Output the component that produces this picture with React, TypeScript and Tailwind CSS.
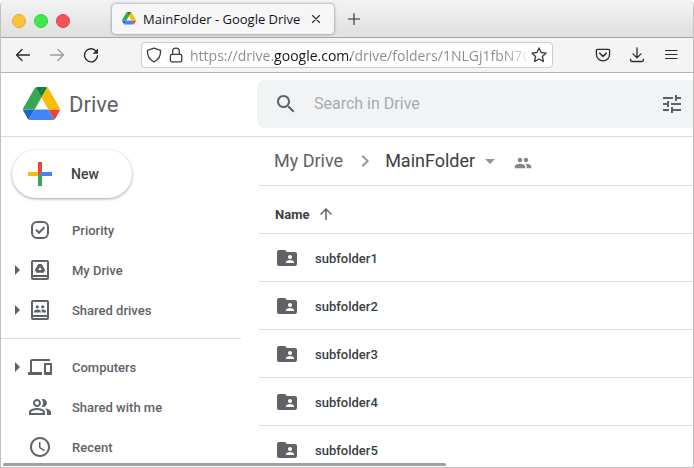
import type { ReactNode } from 'react';

type IconProps = { d: string; size?: string; className?: string };

function Icon({ d, size = 'size-6', className = '' }: IconProps) {
  return (
    <svg viewBox="0 0 24 24" fill="currentColor" aria-hidden="true" className={`block shrink-0 ${size} ${className}`}>
      <path d={d} />
    </svg>
  );
}

const PATHS = {
  search:
    'M15.5 14h-.79l-.28-.27C15.41 12.59 16 11.11 16 9.5 16 5.91 13.09 3 9.5 3S3 5.91 3 9.5 5.91 16 9.5 16c1.61 0 3.09-.59 4.23-1.57l.27.28v.79l5 4.99L20.49 19l-4.99-5zm-6 0C7.01 14 5 11.99 5 9.5S7.01 5 9.5 5 14 7.01 14 9.5 11.99 14 9.5 14z',
  tune: 'M3 17v2h6v-2H3zM3 5v2h10V5H3zm10 16v-2h8v-2h-8v-2h-2v6h2zM7 9v2H3v2h4v2h2V9H7zm14 4v-2H11v2h10zm-6-4h2V7h4V5h-4V3h-2v6z',
  chevron: 'M10 6 8.59 7.41 13.17 12l-4.58 4.59L10 18l6-6z',
  dropDown: 'M7 10l5 5 5-5z',
  people:
    'M16 11c1.66 0 2.99-1.34 2.99-3S17.66 5 16 5s-3 1.34-3 3 1.34 3 3 3zm-8 0c1.66 0 2.99-1.34 2.99-3S9.66 5 8 5 5 6.34 5 8s1.34 3 3 3zm0 2c-2.33 0-7 1.17-7 3.5V19h14v-2.5c0-2.33-4.67-3.5-7-3.5zm8 0c-.29 0-.62.02-.97.05 1.16.84 1.97 1.97 1.97 3.45V19h6v-2.5c0-2.33-4.67-3.5-7-3.5z',
  arrowUp: 'M4 12l1.41 1.41L11 7.83V20h2V7.83l5.58 5.59L20 12l-8-8-8 8z',
  folderShared:
    'M20 6h-8l-2-2H4c-1.1 0-1.99.9-1.99 2L2 18c0 1.1.9 2 2 2h16c1.1 0 2-.9 2-2V8c0-1.1-.9-2-2-2zm-5 3c1.1 0 2 .9 2 2s-.9 2-2 2-2-.9-2-2 .9-2 2-2zm4 8h-8v-1c0-1.33 2.67-2 4-2s4 .67 4 2v1z',
  devices:
    'M4 6h18V4H4c-1.1 0-2 .9-2 2v11H0v3h14v-3H4V6zm19 2h-6c-.55 0-1 .45-1 1v10c0 .55.45 1 1 1h6c.55 0 1-.45 1-1V9c0-.55-.45-1-1-1zm-1 9h-4v-7h4v7z',
  shared:
    'M16.67 13.13C18.04 14.06 19 15.32 19 17v3h4v-3c0-2.18-3.57-3.47-6.33-3.87zM15 12c2.21 0 4-1.79 4-4s-1.79-4-4-4c-.47 0-.91.1-1.33.24C14.5 5.27 15 6.58 15 8s-.5 2.73-1.33 3.76c.42.14.86.24 1.33.24zM9 12c2.21 0 4-1.79 4-4s-1.79-4-4-4-4 1.79-4 4 1.79 4 4 4zm0-6c1.1 0 2 .9 2 2s-.9 2-2 2-2-.9-2-2 .9-2 2-2zm0 7c-2.67 0-8 1.34-8 4v3h16v-3c0-2.66-5.33-4-8-4zm6 5H3v-.99C3.2 16.29 6.3 15 9 15s5.8 1.29 6 2v1z',
  clock:
    'M11.99 2C6.47 2 2 6.48 2 12s4.47 10 9.99 10C17.52 22 22 17.52 22 12S17.52 2 11.99 2zM12 20c-4.42 0-8-3.58-8-8s3.58-8 8-8 8 3.58 8 8-3.58 8-8 8zm.5-13H11v6l5.25 3.15.75-1.23-4.5-2.67z',
};

function DriveLogo({ className }: { className: string }) {
  return (
    <svg viewBox="0 0 87.3 78" aria-hidden="true" className={`block shrink-0 ${className}`}>
      <path fill="#1967d2" d="m6.6 66.85 3.85 6.65c.8 1.4 1.95 2.5 3.3 3.3l13.75-23.8h-27.5c0 1.55.4 3.1 1.2 4.5z" />
      <path fill="#34a853" d="m43.65 25-13.75-23.8c-1.35.8-2.5 1.9-3.3 3.3l-25.4 44a9.06 9.06 0 0 0-1.2 4.5h27.5z" />
      <path fill="#ea4335" d="m73.55 76.8c1.35-.8 2.5-1.9 3.3-3.3l1.6-2.75 7.65-13.25c.8-1.4 1.2-2.95 1.2-4.5h-27.5z" />
      <path fill="#188038" d="m43.65 25 13.75-23.8c-1.35-.8-2.9-1.2-4.5-1.2h-18.5c-1.6 0-3.15.45-4.5 1.2z" />
      <path fill="#4285f4" d="m59.8 53h-32.3l-13.75 23.8c1.35.8 2.9 1.2 4.5 1.2h50.8c1.6 0 3.15-.45 4.5-1.2z" />
      <path fill="#fbbc04" d="m73.4 26.5-12.7-22c-.8-1.4-1.95-2.5-3.3-3.3l-13.75 23.8 16.15 28h27.45c0-1.55-.4-3.1-1.2-4.5z" />
    </svg>
  );
}

function LineIcon({ children, className = '' }: { children: ReactNode; className?: string }) {
  return (
    <svg
      viewBox="0 0 16 16"
      fill="none"
      stroke="currentColor"
      strokeWidth="1.3"
      strokeLinecap="round"
      strokeLinejoin="round"
      aria-hidden="true"
      className={`block size-4 shrink-0 ${className}`}
    >
      {children}
    </svg>
  );
}

function ToolButton({ label, children }: { label: string; children: ReactNode }) {
  return (
    <button type="button" aria-label={label} className="flex h-8 w-[34px] shrink-0 items-center justify-center text-[#2b2a33]">
      {children}
    </button>
  );
}

function TitleBar() {
  return (
    <div className="flex h-[38px] items-center border-b border-[#a5a5a5] bg-linear-to-b from-[#f3f3f3] to-[#dfdfdf] pl-[11px]">
      <div className="flex w-[100px] gap-2 pt-1">
        <button type="button" aria-label="Minimize" className="size-3.5 rounded-full border border-[#e0ac2f] bg-[#fbc338]" />
        <button type="button" aria-label="Maximize" className="size-3.5 rounded-full border border-[#35cf42] bg-[#3eea4b]" />
        <button type="button" aria-label="Close" className="size-3.5 rounded-full border border-[#dc454d] bg-[#f5515a]" />
      </div>
      <div className="flex h-[30px] w-[222px] items-center rounded bg-[#f6f6f6] px-2.5 shadow-[0_0_3px_rgba(0,0,0,0.5)]">
        <DriveLogo className="w-3.5" />
        <span className="ml-[7px] flex-1 pt-0.5 font-['Open_Sans','Noto_Sans',sans-serif] text-[13px] whitespace-nowrap text-[#15141a]">
          MainFolder - Google Drive
        </span>
        <button type="button" aria-label="Close tab" className="text-[#2b2a33]">
          <LineIcon>
            <path d="M4.5 4.5l7 7M11.5 4.5l-7 7" strokeWidth="1.1" />
          </LineIcon>
        </button>
      </div>
      <button type="button" aria-label="New tab" className="ml-3 text-[#2b2a33]">
        <LineIcon>
          <path d="M8 2.5v11M2.5 8h11" strokeWidth="1.1" />
        </LineIcon>
      </button>
    </div>
  );
}

function AddressBar() {
  return (
    <div className="flex h-[35px] items-center border-b border-[#b4b4b4] bg-[#f4f4f4] px-[5px]">
      <ToolButton label="Back">
        <LineIcon>
          <path d="M14.5 8H1.5M7 2.5 1.5 8 7 13.5" />
        </LineIcon>
      </ToolButton>
      <ToolButton label="Forward">
        <LineIcon className="text-[#9c9ca0]">
          <path d="M1.5 8h13M9 2.5 14.5 8 9 13.5" />
        </LineIcon>
      </ToolButton>
      <ToolButton label="Reload">
        <LineIcon>
          <path d="M13.2 4.4A6.5 6.5 0 1 0 14.500 8.8" strokeWidth="1.4" />
          <path d="M15 1.400v5.400H9.600z" fill="currentColor" stroke="none" />
        </LineIcon>
      </ToolButton>
      <div className="mx-[33px] flex h-[26px] min-w-0 flex-1 items-center rounded border border-[#cccccc] bg-white pr-[5px] pl-1 text-[#3c3b44]">
        <LineIcon>
          <path d="M8 1.2 14.6 3.3C14.9 9 12.6 12.8 8 15 3.4 12.8 1.1 9 1.4 3.3z" />
        </LineIcon>
        <LineIcon className="ml-1.5">
          <rect x="2.4" y="7.4" width="11.4" height="7.4" rx="1.6" />
          <path d="M4.6 7.2V4.6a3.4 3.4 0 0 1 6.8 0v2.6" />
        </LineIcon>
        <input
          type="text"
          aria-label="Address"
          readOnly
          value="https://drive.google.com/drive/folders/1NLGj1fbN7C"
          className="ml-1.5 h-6 min-w-0 flex-1 bg-[linear-gradient(to_right,#8a8a8d_84px,#15141a_84px,#15141a_161px,#8a8a8d_161px,#8a8a8d_315px,transparent_340px)] bg-clip-text font-['Open_Sans','Noto_Sans',sans-serif] text-[14px] text-transparent outline-none"
        />
        <button type="button" aria-label="Bookmark this page" className="ml-1">
          <LineIcon>
            <path d="M8 .9 10.1 5.5l5 .6-3.7 3.4 1 5L8 12l-4.4 2.5 1-5L.9 6.1l5-.6z" />
          </LineIcon>
        </button>
      </div>
      <ToolButton label="Save to Pocket">
        <LineIcon>
          <path d="M2.6 2.3h10.8c.7 0 1.2.5 1.2 1.2v3.8a6.6 6.6 0 0 1-13.2 0V3.5c0-.7.5-1.2 1.2-1.2z" />
          <path d="M4.7 6.3 8 9.4l3.3-3.1" strokeWidth="1.5" />
        </LineIcon>
      </ToolButton>
      <ToolButton label="Downloads">
        <LineIcon>
          <path d="M8 .8v9.8M4 6.9l4 4 4-4M1.6 12.2v.9c0 .8.6 1.4 1.4 1.4h10c.8 0 1.4-.6 1.4-1.4v-.9" />
        </LineIcon>
      </ToolButton>
      <ToolButton label="Menu">
        <LineIcon>
          <path d="M2.500 3.500h11.500M2.500 7.500h11.500M2.500 11.500h11.500" strokeWidth="1.2" />
        </LineIcon>
      </ToolButton>
    </div>
  );
}

function Header() {
  return (
    <header className="flex h-16 items-center border-b border-[#dadce0] pb-px">
      <a href="#home" className="flex w-64 shrink-0 items-center gap-[9px] pl-[22px] text-[22px] leading-7 text-[#5f6368]">
        <DriveLogo className="w-[37px]" />
        <span className="pt-0.5">Drive</span>
      </a>
      <form className="flex h-12 min-w-0 flex-1 items-center gap-4 rounded-l-lg bg-[#f1f3f4] pr-[9px] pl-[17px] text-[#5f6368]">
        <button type="button" aria-label="Search">
          <Icon d={PATHS.search} />
        </button>
        <input
          type="search"
          aria-label="Search in Drive"
          placeholder="Search in Drive"
          className="min-w-0 flex-1 bg-transparent text-base text-[#202124] outline-none placeholder:text-[#a9acaf]"
        />
        <button type="button" aria-label="Search options">
          <Icon d={PATHS.tune} />
        </button>
      </form>
    </header>
  );
}

function PriorityIcon() {
  return (
    <svg viewBox="0 0 24 24" fill="none" stroke="currentColor" strokeWidth="2" aria-hidden="true" className="block size-6">
      <rect x="4" y="4" width="16" height="16" rx="5" />
      <path d="M8 11.8l3 3 5.4-5.6" />
    </svg>
  );
}

function DriveBox({ children }: { children: ReactNode }) {
  return (
    <svg viewBox="0 0 24 24" fill="none" stroke="currentColor" strokeWidth="2" aria-hidden="true" className="block size-6">
      <rect x="4" y="3" width="16" height="18" rx="1" />
      <path d="M4 18h16" />
      {children}
    </svg>
  );
}

const myDriveIcon = (
  <DriveBox>
    <path
      d="M10.4 6h3.2l3.6 6.1-1.5 2.7H8.3l-1.5-2.7zM12 9.1l-1.7 3h3.4z"
      fill="currentColor"
      fillRule="evenodd"
      stroke="none"
    />
  </DriveBox>
);

const sharedDrivesIcon = (
  <DriveBox>
    <g fill="currentColor" stroke="none">
      <circle cx="9.3" cy="8.8" r="1.6" />
      <circle cx="14.7" cy="8.8" r="1.6" />
      <path d="M6 14.6v-1c0-1.3 2-2 3.4-2s3.4.7 3.4 2v1zM13.8 14.6v-1c0-.8-.4-1.4-.9-1.8 2.2-.7 5.1.3 5.1 1.8v1z" />
    </g>
  </DriveBox>
);

type NavEntry = { label: string; icon: ReactNode; expandable?: boolean };

const primaryNav: NavEntry[] = [
  { label: 'Priority', icon: <PriorityIcon /> },
  { label: 'My Drive', icon: myDriveIcon, expandable: true },
  { label: 'Shared drives', icon: sharedDrivesIcon, expandable: true },
];

const secondaryNav: NavEntry[] = [
  { label: 'Computers', icon: <Icon d={PATHS.devices} />, expandable: true },
  { label: 'Shared with me', icon: <Icon d={PATHS.shared} /> },
  { label: 'Recent', icon: <Icon d={PATHS.clock} /> },
];

function NavList({ entries }: { entries: NavEntry[] }) {
  return (
    <ul>
      {entries.map(({ label, icon, expandable }) => (
        <li key={label} className="flex h-10 items-center gap-2 pl-3.5 text-[#5f6368]">
          <span className="w-[5px]">
            {expandable && (
              <button type="button" aria-label={`Expand ${label}`} className="block">
                <svg viewBox="0 0 5 10" fill="currentColor" aria-hidden="true" className="block h-2.5 w-[5px]">
                  <path d="M0 0l5 5-5 5z" />
                </svg>
              </button>
            )}
          </span>
          <a href="#nav" className="flex items-center gap-5 text-[13px] leading-5 font-medium">
            {icon}
            <span className="pt-0.5">{label}</span>
          </a>
        </li>
      ))}
    </ul>
  );
}

function Sidebar() {
  return (
    <nav className="w-[258px] shrink-0 pt-[13px]">
      <button
        type="button"
        className="mb-3 ml-[11px] flex h-12 w-[120px] items-center gap-[13px] rounded-full bg-white pl-2.5 text-sm font-medium text-[#3c4043] shadow-[0_1px_2px_0_rgba(60,64,67,0.302),0_1px_3px_1px_rgba(60,64,67,0.149)]"
      >
        <svg viewBox="0 0 36 36" aria-hidden="true" className="block size-9">
          <path fill="#34A853" d="M16 16v14h4V20z" />
          <path fill="#4285F4" d="M30 16H20l-4 4h14z" />
          <path fill="#FBBC05" d="M6 16v4h10l4-4z" />
          <path fill="#EA4335" d="M20 16V6h-4v14z" />
        </svg>
        New
      </button>
      <NavList entries={primaryNav} />
      <hr className="mt-2 mr-[18px] mb-2 border-[#dadce0]" />
      <NavList entries={secondaryNav} />
    </nav>
  );
}

const folders = ['subfolder1', 'subfolder2', 'subfolder3', 'subfolder4', 'subfolder5'];

function FileList() {
  return (
    <main className="min-w-0 flex-1">
      <div className="flex h-[49px] items-center border-b border-[#dadce0] pl-[15px] text-lg">
        <a href="#my-drive" className="text-[#5f6368]">
          My Drive
        </a>
        <Icon d={PATHS.chevron} className="mr-2 ml-2.5 text-[#96999c]" />
        <button type="button" className="flex items-center gap-[3px] text-[#3c4043]">
          MainFolder
          <Icon d={PATHS.dropDown} className="text-[#909397]" />
        </button>
        <button type="button" aria-label="Manage access" className="ml-3 pt-1 text-[#858585]">
          <Icon d={PATHS.people} size="size-[18px]" />
        </button>
      </div>
      <table className="w-full border-separate border-spacing-0 text-left text-[13px] leading-5 text-[#3c4043]">
        <thead>
          <tr>
            <th scope="col" className="h-12 border-b border-[#dadce0] pt-2 pl-4 font-bold">
              <button type="button" className="flex items-center gap-2">
                <span className="pt-0.5">Name</span>
                <Icon d={PATHS.arrowUp} size="size-[18px]" className="text-[#5f6368]" />
              </button>
            </th>
          </tr>
        </thead>
        <tbody>
          {folders.map((name) => (
            <tr key={name}>
              <td className="h-12 border-b border-[#dadce0] pl-4 font-medium">
                <div className="flex items-center gap-4">
                  <Icon d={PATHS.folderShared} className="text-[#5f6368]" />
                  <span className="pt-0.5">{name}</span>
                </div>
              </td>
            </tr>
          ))}
        </tbody>
      </table>
    </main>
  );
}

export default function App() {
  return (
    <div className="relative flex h-screen flex-col overflow-hidden rounded-t-md border-x border-b border-[#c0c0c0] bg-white font-['Roboto','Liberation_Sans',sans-serif]">
      <TitleBar />
      <AddressBar />
      <Header />
      <div className="flex min-h-0 flex-1 overflow-hidden">
        <Sidebar />
        <FileList />
      </div>
      <div className="absolute bottom-px left-0.5 h-[3px] w-[64%] rounded-full bg-[#a0a0a0]" />
    </div>
  );
}
